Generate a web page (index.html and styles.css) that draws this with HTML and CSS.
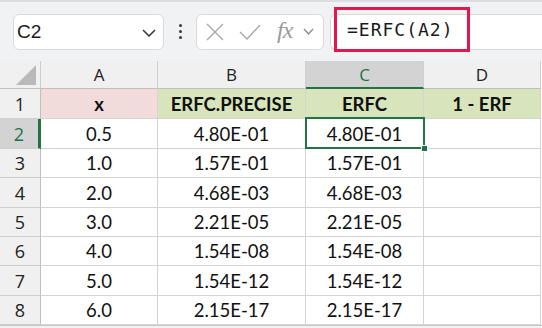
FILE: index.html
```html
<!DOCTYPE html>
<html>
<head>
<meta charset="utf-8">
<link rel="stylesheet" href="styles.css">
</head>
<body>
<div class="toolbar">
  <div class="namebox">
    <span class="name">C2</span>
    <svg class="chev" width="14" height="8" viewBox="0 0 14 8"><path d="M1 1 L7 7 L13 1" fill="none" stroke="#333" stroke-width="1.5"/></svg>
  </div>
  <div class="dots"><span></span><span></span><span></span></div>
  <div class="fxbox">
    <svg width="18" height="18" viewBox="0 0 18 18"><path d="M1 1 L17 17 M17 1 L1 17" stroke="#a8a8a8" stroke-width="1.4" fill="none"/></svg>
    <svg width="22" height="16" viewBox="0 0 22 16"><path d="M1 8 L8 15 L21 1" stroke="#a8a8a8" stroke-width="1.4" fill="none"/></svg>
    <span class="fx">fx</span>
    <svg width="11" height="7" viewBox="0 0 11 7"><path d="M1 1 L5.5 6 L10 1" fill="none" stroke="#8a8a8a" stroke-width="1.3"/></svg>
  </div>
  <div class="formula">
    <div class="hl">=ERFC(A2)</div>
  </div>
</div>
<div class="sheet">
  <div class="grid">
    <div class="hd corner"><span class="tri"></span></div>
    <div class="hd">A</div>
    <div class="hd">B</div>
    <div class="hd sel-col">C</div>
    <div class="hd">D</div>

    <div class="rh">1</div>
    <div class="c b pink">x</div>
    <div class="c b green">ERFC.PRECISE</div>
    <div class="c b green">ERFC</div>
    <div class="c b green">1 - ERF</div>

    <div class="rh sel-row r30">2</div>
    <div class="c r30">0.5</div>
    <div class="c r30">4.80E-01</div>
    <div class="c r30 active">4.80E-01<span class="selbox"></span><span class="handle"></span></div>
    <div class="c r30"></div>

    <div class="rh">3</div>
    <div class="c">1.0</div>
    <div class="c">1.57E-01</div>
    <div class="c">1.57E-01</div>
    <div class="c"></div>

    <div class="rh r30">4</div>
    <div class="c r30">2.0</div>
    <div class="c r30">4.68E-03</div>
    <div class="c r30">4.68E-03</div>
    <div class="c r30"></div>

    <div class="rh">5</div>
    <div class="c">3.0</div>
    <div class="c">2.21E-05</div>
    <div class="c">2.21E-05</div>
    <div class="c"></div>

    <div class="rh">6</div>
    <div class="c">4.0</div>
    <div class="c">1.54E-08</div>
    <div class="c">1.54E-08</div>
    <div class="c"></div>

    <div class="rh r30">7</div>
    <div class="c r30">5.0</div>
    <div class="c r30">1.54E-12</div>
    <div class="c r30">1.54E-12</div>
    <div class="c r30"></div>

    <div class="rh">8</div>
    <div class="c">6.0</div>
    <div class="c">2.15E-17</div>
    <div class="c">2.15E-17</div>
    <div class="c"></div>
  </div>
</div>
</body>
</html>
```
FILE: styles.css
```css
* { box-sizing: border-box; }
html, body { margin: 0; padding: 0; }
body {
  width: 542px;
  height: 328px;
  overflow: hidden;
  background: #f1f2f4;
  font-family: "Open Sans", "Noto Sans", sans-serif;
}
.toolbar {
  height: 61px;
  display: flex;
  align-items: center;
  padding-left: 13px;
  background: #f1f2f4;
  border-top: 2px solid #dcdde0;
}
.namebox {
  width: 151px;
  height: 36px;
  background: #fff;
  border: 1px solid #dadada;
  border-radius: 6px;
  display: flex;
  align-items: center;
  justify-content: space-between;
  padding: 0 7px 0 3px;
}
.name {
  font-family: "Liberation Sans", Arial, sans-serif;
  font-size: 19px;
  color: #1a1a1a;
}
.chev { margin-top: 2px; }
.dots {
  width: 32px;
  display: flex;
  flex-direction: column;
  align-items: center;
  gap: 3px;
}
.dots span {
  width: 3px;
  height: 3px;
  border-radius: 50%;
  background: #3a3a3a;
}
.fxbox {
  width: 128px;
  height: 36px;
  background: #fff;
  border: 1px solid #dadada;
  border-radius: 6px;
  display: flex;
  align-items: center;
  padding-left: 9px;
  gap: 0;
}
.fxbox svg:nth-child(1) { margin-right: 15px; }
.fxbox svg:nth-child(2) { margin-right: 16px; }
.fx {
  font-family: "Liberation Serif", serif;
  font-style: italic;
  font-size: 24px;
  color: #9a9a9a;
  margin-right: 11px;
  letter-spacing: -1px;
  line-height: 1;
  margin-top: -3px;
}
.formula {
  margin-left: 6px;
  flex: 1;
  height: 36px;
  background: #fff;
  border: 1px solid #dadada;
  border-right: none;
  border-radius: 6px 0 0 6px;
  position: relative;
}
.hl {
  position: absolute;
  left: 3px;
  top: -8px;
  width: 136px;
  height: 45px;
  border: 3px solid #e3174a;
  font-family: "DejaVu Sans Mono", monospace;
  font-size: 18px;
  letter-spacing: 1px;
  color: #1a1a1a;
  padding-left: 10px;
  line-height: 39px;
}
.sheet {
  background: #fff;
}
.grid {
  display: grid;
  grid-template-columns: 41px 117px 148px 118px 117px;
  grid-template-rows: 28px 30px 30px 29px 30px 29px 29px 30px 29px;
  font-family: "Lato", "Open Sans", sans-serif;
  font-size: 18.5px;
  color: #111;
  border-bottom: 1px solid #c8c8c8;
  width: 542px;
  background: #fff;
}
.grid > div {
  border-right: 1px solid #d4d4d4;
  border-bottom: 1px solid #d4d4d4;
  display: flex;
  align-items: center;
  justify-content: center;
}
.hd {
  background: #f0f0f0;
  font-family: "Open Sans", sans-serif;
  font-size: 17px;
  color: #222;
  border-color: #cfcfcf !important;
  border-bottom-color: #bfbfbf !important;
}
.corner { position: relative; }
.tri {
  position: absolute;
  right: 4px;
  bottom: 3px;
  width: 0;
  height: 0;
  border-left: 20px solid transparent;
  border-bottom: 20px solid #b9b9b9;
}
.sel-col {
  background: #d3d3d3;
  color: #1e7145;
  border-bottom: 2px solid #217346 !important;
}
.rh {
  background: #f0f0f0;
  font-family: "Open Sans", sans-serif;
  font-size: 18px;
  color: #222;
  border-right-color: #bfbfbf !important;
  border-bottom-color: #cfcfcf !important;
}
.sel-row {
  background: #d3d3d3;
  color: #1e7145;
  border-right: 3px solid #217346 !important;
}
.b { font-weight: 700; }
.pink { background: #f2dcdb; }
.green { background: #d8e4bc; }
.active { position: relative; }
.selbox {
  position: absolute;
  left: -1px;
  top: -2px;
  right: -2px;
  bottom: -1px;
  border: 2px solid #217346;
  pointer-events: none;
}
.handle {
  position: absolute;
  right: -5px;
  bottom: -4px;
  width: 7px;
  height: 7px;
  background: #217346;
  border: 1px solid #fff;
}
```
